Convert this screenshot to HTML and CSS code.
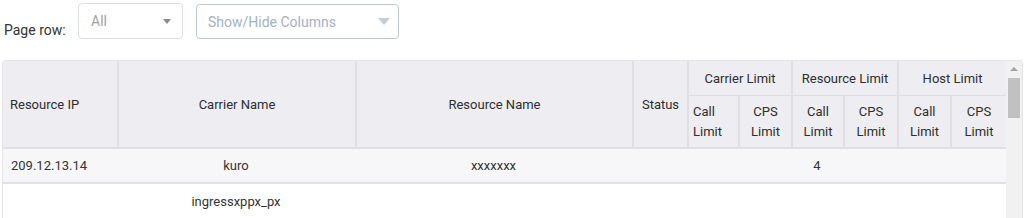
FILE: index.html
```html
<!DOCTYPE html>
<html lang="en">
<head>
    <meta charset="UTF-8">
    <title>Resources</title>
    <link rel="stylesheet" href="styles.css">
</head>
<body>
    <div class="toolbar">
        <span class="label">Page row:</span>
        <div class="select select-rows">
            <span>All</span>
            <span class="caret"></span>
        </div>
        <div class="select select-cols">
            <span>Show/Hide Columns</span>
            <span class="caret big"></span>
        </div>
    </div>

    <div class="grid">
        <table>
            <colgroup>
                <col style="width:114px">
                <col style="width:238px">
                <col style="width:277px">
                <col style="width:55px">
                <col style="width:51px">
                <col style="width:53px">
                <col style="width:52px">
                <col style="width:54px">
                <col style="width:53px">
                <col style="width:56px">
            </colgroup>
            <thead>
                <tr class="top">
                    <th rowspan="2" class="left first">Resource IP</th>
                    <th rowspan="2">Carrier Name</th>
                    <th rowspan="2">Resource Name</th>
                    <th rowspan="2">Status</th>
                    <th colspan="2">Carrier Limit</th>
                    <th colspan="2">Resource Limit</th>
                    <th colspan="2">Host Limit</th>
                </tr>
                <tr class="sub">
                    <th class="left">Call Limit</th>
                    <th>CPS Limit</th>
                    <th>Call Limit</th>
                    <th>CPS Limit</th>
                    <th>Call Limit</th>
                    <th>CPS Limit</th>
                </tr>
            </thead>
            <tbody>
                <tr class="odd">
                    <td class="left">209.12.13.14</td>
                    <td>kuro</td>
                    <td>xxxxxxx</td>
                    <td></td>
                    <td></td>
                    <td></td>
                    <td>4</td>
                    <td></td>
                    <td></td>
                    <td></td>
                </tr>
                <tr>
                    <td class="left"></td>
                    <td>ingressxppx_px</td>
                    <td></td>
                    <td></td>
                    <td></td>
                    <td></td>
                    <td></td>
                    <td></td>
                    <td></td>
                    <td></td>
                </tr>
            </tbody>
        </table>
        <div class="scrollbar">
            <span class="arrow"></span>
            <span class="thumb"></span>
        </div>
    </div>
</body>
</html>
```

FILE: styles.css
```css
body {
    margin: 0;
    font-family: Roboto, "Liberation Sans", Arial, sans-serif;
    font-size: 13px;
    color: #333;
    background: #fff;
    overflow: hidden;
}

.toolbar { display: flex; align-items: flex-start; padding: 3px 0 0 4px; height: 60px; box-sizing: border-box; }
.label { margin-top: 19px; width: 74px; font-size: 14px; }
.select {
    display: flex; align-items: center; justify-content: space-between;
    box-sizing: border-box; height: 36px; border: 1px solid #dcdfe6; border-radius: 4px;
    font-size: 14px; color: #a2a2a2;
}
.select-rows { width: 105px; padding: 0 11px 0 12px; margin-bottom: 2px; }
.select-cols { width: 203px; margin: 1px 0 0 13px; height: 35px; padding: 0 8px 0 11px; border-color: #bcc7d8; color: #a6b0c3; }
.caret { width: 0; height: 0; border-left: 4px solid transparent; border-right: 4px solid transparent; border-top: 5px solid #8c8c8c; }
.caret.big { border-left-width: 6px; border-right-width: 6px; border-top: 7px solid #c3cbd8; }

.grid {
    display: flex; align-items: stretch;
    margin-left: 2px; width: 1021px; height: 158px; box-sizing: border-box;
    border: 1px solid #e4e4e9; border-bottom: 0; border-radius: 4px 4px 0 0; overflow: hidden;
}
table { width: 1003px; table-layout: fixed; border-collapse: separate; border-spacing: 0; align-self: flex-start; }
th, td { padding: 0 4px; text-align: center; font-weight: normal; box-sizing: border-box; }
th { background: #ededf2; border-left: 2px solid #dfdfe4; color: #2e2e2e; }
th.first { border-left: 0; }
th.left, td.left { text-align: left; padding-left: 7px; }
.top th { height: 35px; border-bottom: 1px solid #dfdfe4; }
.top th[rowspan] { border-bottom: 2px solid #dfdfe4; }
.sub th { height: 53px; border-bottom: 2px solid #dfdfe4; line-height: 20px; }
.sub th.left { padding-left: 4px; }
td { height: 35px; border-bottom: 2px solid #e0e0e5; }
td.left { padding-left: 8px; }
tr.odd td { background: #f7f7f9; }
tbody tr:last-child td { border-bottom: 0; }

.scrollbar { width: 16px; background: #f1f1f1; position: relative; }
.arrow { position: absolute; left: 4px; top: 6px; border-left: 4px solid transparent; border-right: 4px solid transparent; border-bottom: 4px solid #a3a3a3; }
.thumb { position: absolute; left: 2px; top: 17px; width: 12px; height: 40px; background: #c1c1c1; }
```
